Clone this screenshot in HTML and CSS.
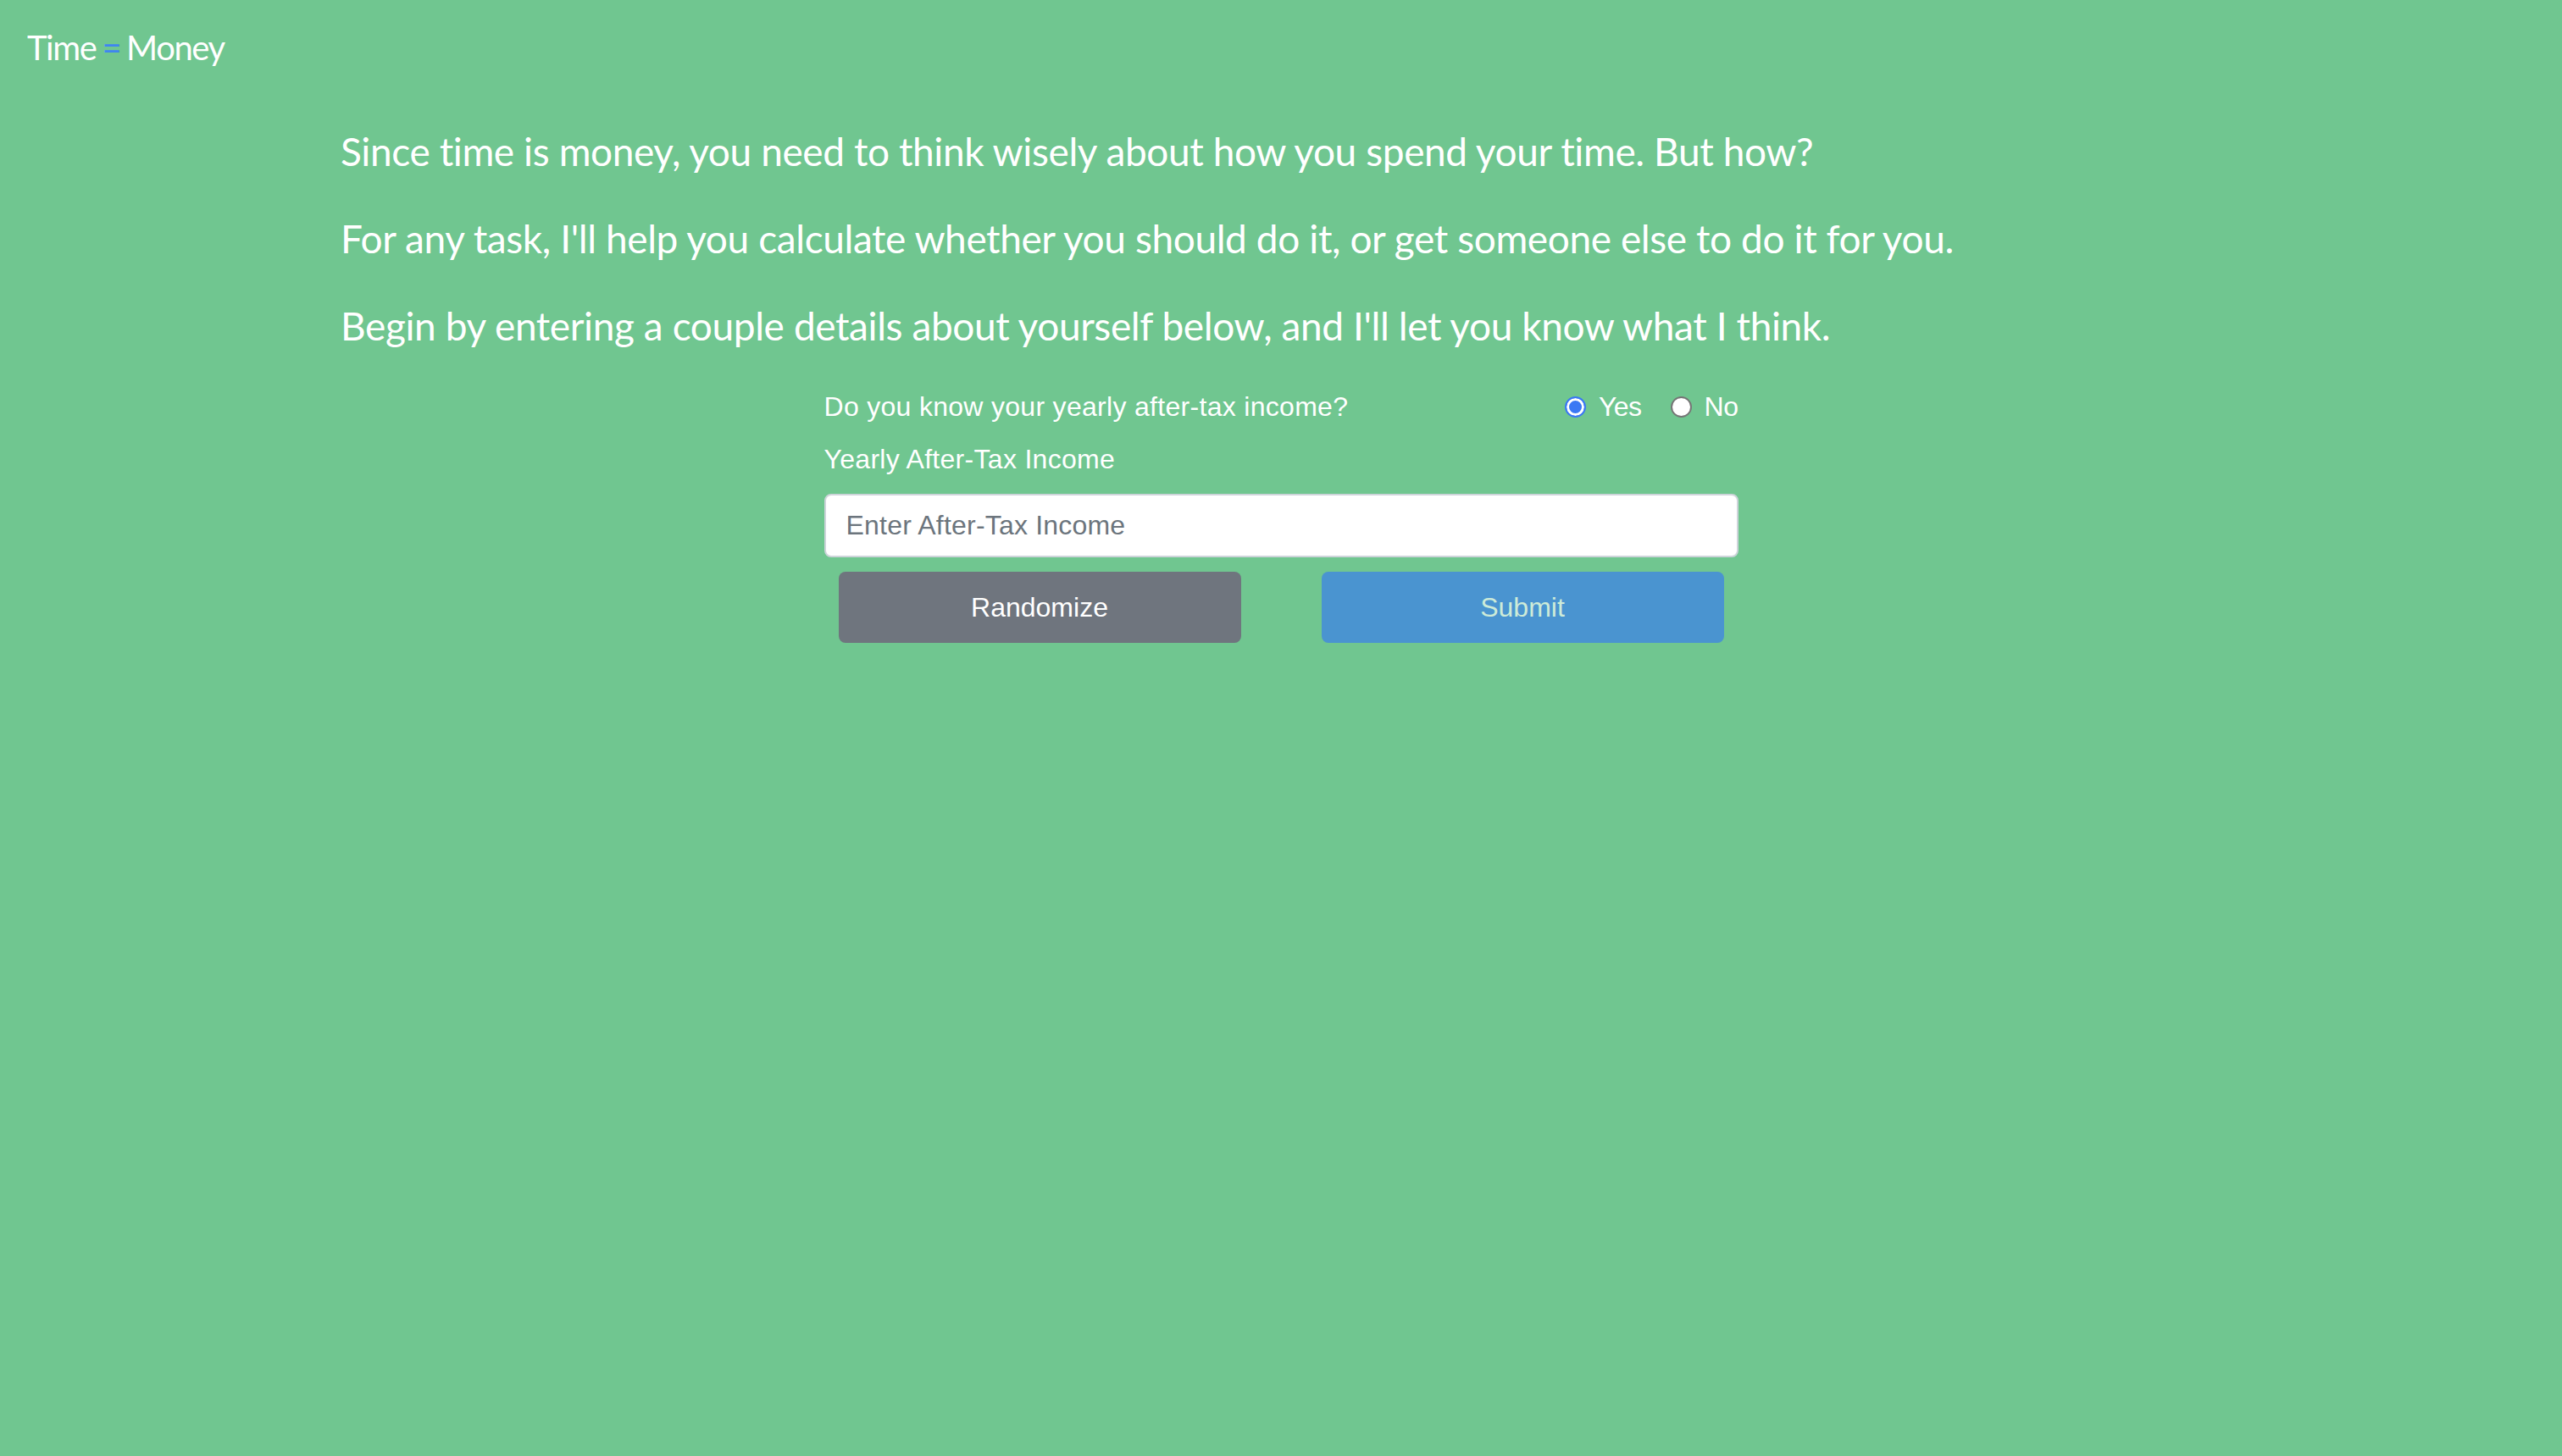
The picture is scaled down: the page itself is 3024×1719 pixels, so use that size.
FILE: index.html
```html
<!DOCTYPE html>
<html lang="en">
<head>
<meta charset="utf-8">
<title>Time = Money</title>
<link rel="stylesheet" href="styles.css">
</head>
<body>
<nav class="navbar">
  <span class="brand">Time <span class="eq">=</span> Money</span>
</nav>
<main class="container">
  <p class="intro">Since time is money, you need to think wisely about how you spend your time. But how?</p>
  <p class="intro">For any task, I'll help you calculate whether you should do it, or get someone else to do it for you.</p>
  <p class="intro">Begin by entering a couple details about yourself below, and I'll let you know what I think.</p>
  <form class="income-form">
    <div class="question-row">
      <span class="question">Do you know your yearly after-tax income?</span>
      <div class="radios">
        <label class="radio"><input type="radio" name="know" checked><span>Yes</span></label>
        <label class="radio"><input type="radio" name="know"><span>No</span></label>
      </div>
    </div>
    <label class="field-label" for="income">Yearly After-Tax Income</label>
    <input id="income" class="field" type="text" placeholder="Enter After-Tax Income">
    <div class="buttons">
      <button type="button" class="btn btn-grey">Randomize</button>
      <button type="button" class="btn btn-blue">Submit</button>
    </div>
  </form>
</main>
</body>
</html>
```
FILE: styles.css
```css
html, body {
  margin: 0;
  padding: 0;
  background: #70c690;
  min-height: 100%;
}
body {
  color: #fff;
  font-family: Lato, "Open Sans", sans-serif;
  min-height: 1719px;
}
.navbar {
  padding: 26px 32px 0;
  height: 58px;
}
.brand {
  font-size: 40px;
  line-height: 60px;
  letter-spacing: -1.4px;
  word-spacing: -2px;
}
.eq {
  color: #3f86f0;
}
.container {
  width: 2220px;
  margin: 43px auto 0;
  padding: 0 30px;
}
.intro {
  margin: 0;
  font-size: 46px;
  line-height: 103px;
  letter-spacing: -0.4px;
  white-space: nowrap;
}
.income-form {
  width: 1079px;
  margin: 20px auto 0;
  font-family: "Liberation Sans", Arial, sans-serif;
  font-size: 32px;
}
.question-row {
  display: flex;
  justify-content: space-between;
  align-items: center;
  height: 48px;
  line-height: 48px;
}
.question {
  letter-spacing: 0.3px;
}
.radios {
  display: flex;
  gap: 34px;
}
.radio {
  display: flex;
  align-items: center;
  gap: 15px;
  letter-spacing: -0.5px;
}
.radio input {
  appearance: none;
  -webkit-appearance: none;
  margin: 0;
  width: 25px;
  height: 25px;
  border-radius: 50%;
  background: #fff;
  border: 2px solid #767676;
  box-sizing: border-box;
}
.radio input:checked {
  border: 2px solid #3b78f4;
  background: #3b78f4;
  box-shadow: inset 0 0 0 3px #fff;
}
.field-label {
  display: block;
  margin-top: 14px;
  line-height: 48px;
  letter-spacing: 0.3px;
}
.field {
  display: block;
  box-sizing: border-box;
  width: 100%;
  height: 75px;
  margin-top: 17px;
  padding: 0 24px;
  border: 2px solid #ced4da;
  border-radius: 8px;
  background: #fff;
  font-family: inherit;
  font-size: 32px;
  letter-spacing: 0.2px;
  color: #495057;
  outline: none;
}
.field::placeholder {
  color: #6c757d;
}
.buttons {
  display: flex;
  justify-content: space-between;
  padding: 0 17px;
  margin-top: 17px;
}
.btn {
  width: 475px;
  height: 84px;
  border: none;
  border-radius: 8px;
  font-family: inherit;
  font-size: 32px;
  cursor: pointer;
}
.btn-grey {
  background: #6f757e;
  color: #fff;
}
.btn-blue {
  background: #4a94d0;
  color: #cdebd8;
}
```
